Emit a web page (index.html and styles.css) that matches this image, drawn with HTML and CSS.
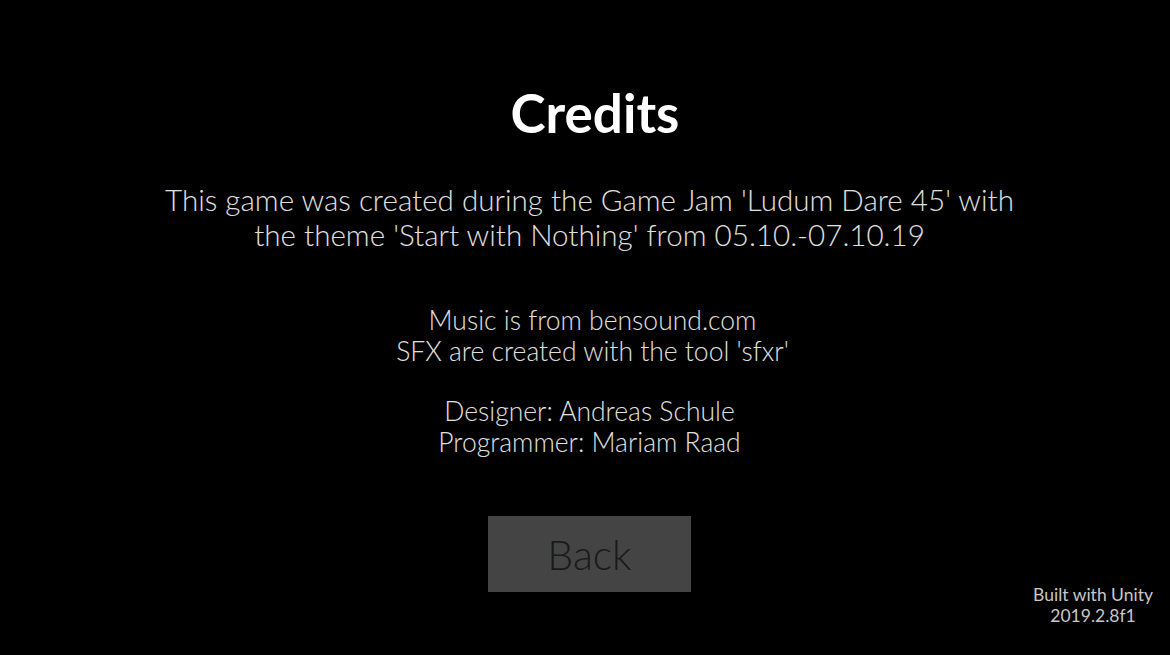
FILE: index.html
```html
<!DOCTYPE html>
<html>
<head>
<meta charset="utf-8">
<link rel="stylesheet" href="styles.css">
</head>
<body>
<main class="screen">
  <h1 class="title">Credits</h1>
  <p class="intro">This game was created during the Game Jam 'Ludum Dare 45' with<br>the theme 'Start with Nothing' from 05.10.-07.10.19</p>
  <p class="block block-audio">Music is from bensound.com<br>SFX are created with the tool 'sfxr'</p>
  <p class="block">Designer: Andreas Schule<br>Programmer: Mariam Raad</p>
  <button class="back">Back</button>
</main>
<div class="built">Built with Unity<br>2019.2.8f1</div>
</body>
</html>
```
FILE: styles.css
```css
html, body {
  margin: 0;
  padding: 0;
  background: #000;
  width: 1170px;
  height: 655px;
  overflow: hidden;
}
body {
  font-family: "Lato", "Liberation Sans", sans-serif;
  color: #e0e0e0;
  position: relative;
}
.screen {
  display: flex;
  flex-direction: column;
  align-items: center;
  padding-top: 81px;
  padding-left: 9px;
}
.title {
  margin: 0 0 0 11px;
  font-weight: 700;
  font-size: 53px;
  line-height: 64px;
  color: #fff;
}
.intro {
  margin: 37px 0 0 0;
  font-weight: 300;
  font-size: 29.6px;
  line-height: 35px;
  text-align: center;
}
.block {
  margin: 0;
  font-weight: 300;
  font-size: 26.5px;
  line-height: 31px;
  text-align: center;
}
.intro + .block { margin-top: 53px; }
.block-audio { margin-left: 6px; }
.block + .block { margin-top: 29px; }
.back {
  margin-top: 58px;
  width: 203px;
  height: 76px;
  background: #444;
  border: none;
  font-family: "Lato", sans-serif;
  font-weight: 300;
  font-size: 41px;
  color: #1a1a1a;
  padding: 0;
}
.built {
  position: absolute;
  right: 17px;
  bottom: 29px;
  font-weight: 400;
  font-size: 17.5px;
  line-height: 21px;
  text-align: center;
  color: #c8c8c8;
}
```
